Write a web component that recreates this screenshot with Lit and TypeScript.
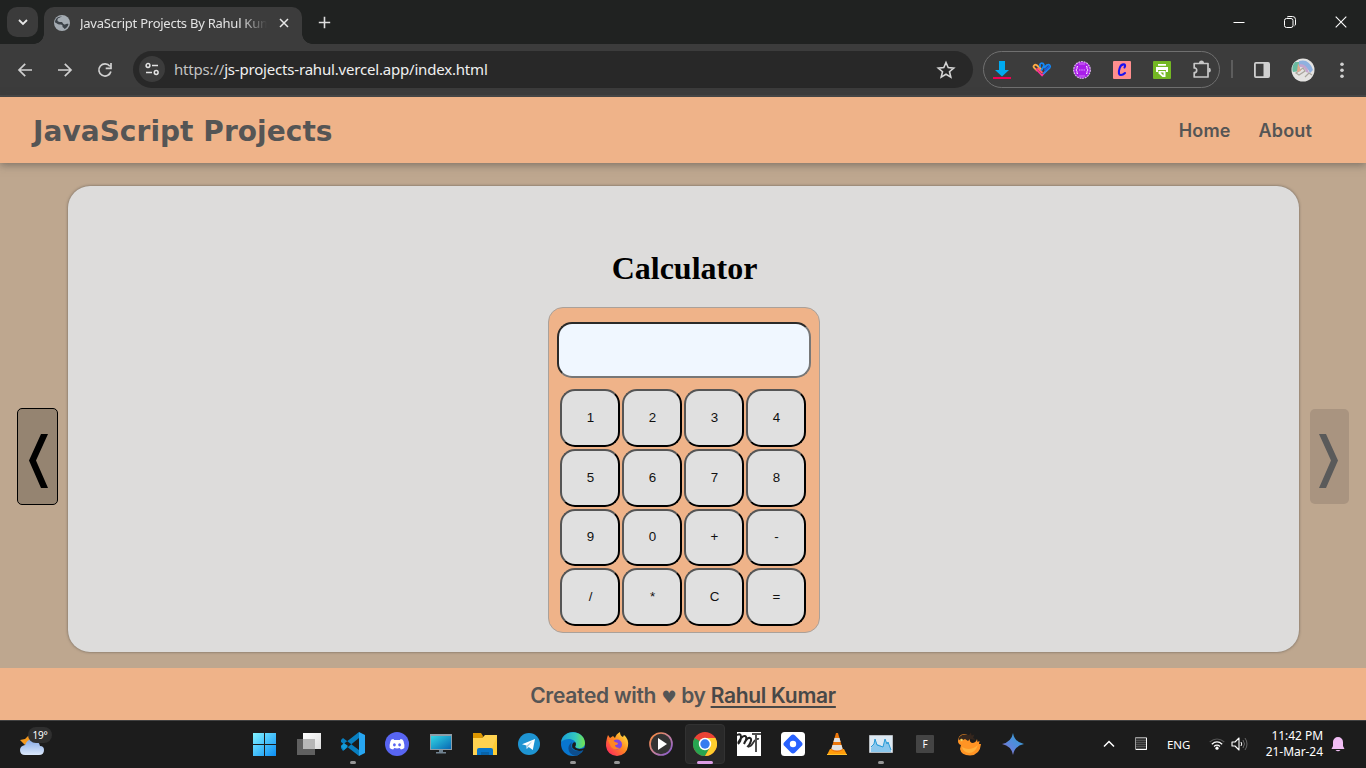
import { LitElement, html, css, svg } from "lit";
import { customElement } from "lit/decorators.js";
import { classMap } from "lit/directives/class-map.js";

const icon = (size: number, body: unknown, view = 24) =>
  html`<svg width=${size} height=${size} viewBox="0 0 ${view} ${view}" fill="none">${body}</svg>`;

@customElement("browser-chrome")
class BrowserChrome extends LitElement {
  static styles = css`
    :host { display: block; height: 97px; font-family: "Noto Sans", sans-serif; color: #e3e3e3; }
    svg { display: block; flex: none; }
    .tabs { height: 44px; box-sizing: border-box; background: #202221; display: flex; padding: 7px 0 0 7px; }
    .drop { width: 31px; height: 30px; border-radius: 10px; background: #3b3b3b; display: grid; place-items: center; }
    .tab { position: relative; margin-left: 6px; width: 258px; height: 37px; box-sizing: border-box; border-radius: 10px 10px 0 0; background: #3c3c3c; display: flex; align-items: center; padding: 0 9px 6px 9px; }
    .tab::before, .tab::after { content: ""; position: absolute; bottom: 0; width: 10px; height: 10px; }
    .tab::before { left: -10px; background: radial-gradient(circle at 0 0, transparent 9.5px, #3c3c3c 10px); }
    .tab::after { right: -10px; background: radial-gradient(circle at 100% 0, transparent 9.5px, #3c3c3c 10px); }
    .title { margin: 1px 0 0 9px; width: 187px; font-size: 13px; letter-spacing: -0.25px; line-height: 18px; white-space: nowrap; overflow: hidden; -webkit-mask-image: linear-gradient(90deg, #000 86%, transparent 100%); mask-image: linear-gradient(90deg, #000 86%, transparent 100%); }
    .close { margin-left: 11px; }
    .plus { margin: 6px 0 0 13px; }
    .window { margin-left: auto; display: flex; height: 30px; align-items: center; }
    .window > span { width: 51px; display: grid; place-items: center; }
    .bar { height: 53px; box-sizing: border-box; background: #3c3c3c; border-bottom: 2px solid #474747; display: flex; align-items: center; padding: 0 0 1px 4px; }
    .slot { width: 40px; height: 36px; box-sizing: border-box; padding-top: 1px; display: grid; place-items: center; flex: none; }
    .nudge { padding-left: 1px; }
    .omni { margin-left: 9px; width: 840px; height: 37px; border-radius: 19px; background: #282828; display: flex; align-items: center; box-sizing: border-box; padding-left: 6px; flex: none; }
    .site { width: 26px; height: 26px; border-radius: 50%; background: #3c3c3c; display: grid; place-items: center; }
    .url { margin-left: 9px; font-size: 15px; letter-spacing: -0.19px; line-height: 22px; white-space: nowrap; color: #f0f0f0; }
    .dim { color: #c3c3c3; }
    .star { margin-left: auto; margin-right: 7px; }
    .ext { margin-left: 10px; width: 237px; height: 37px; box-sizing: border-box; border: 1px solid #707070; border-radius: 19px; display: flex; align-items: center; justify-content: center; flex: none; }
    .ext .slot { padding-top: 2px; }
    .sep { margin: 0 9px 0 11px; width: 2px; height: 18px; background: #5d5d5d; }
  `;
  render() {
    const s = "#d0d0d0";
    return html`
      <div class="tabs">
        <div class="drop">${icon(12, svg`<path d="M2 4l4 4 4-4" stroke="#e8e8e8" stroke-width="1.8"/>`, 12)}</div>
        <div class="tab">
          ${icon(18, svg`<circle cx="9" cy="9" r="8" fill="#a4abb2"/><path d="M9 2.500c-1 1-4 1-4.500 3s1.500 2.500 4 2.500c1.500 0 1 2.500 3.500 2.500 1 0 2-1 3.500-.5-.5 2.500-2 4-4 5-.5-1.500-2.500-1.500-2-3 .3-1.500-1.500-1.500-3-1.500C4.500 10.500 3 8.500 2 8.500c0-3.500 3-6.500 7-6z" fill="#3c4248"/><path d="M10 2c-1 2 1 2 1 3s1 1 2 1" stroke="#a4abb2" stroke-width="1.500"/>`, 18)}
          <div class="title">JavaScript Projects By Rahul Kumar</div>
          <div class="close">${icon(12, svg`<path d="M2 2l8 8M10 2l-8 8" stroke="#e8e8e8" stroke-width="1.5"/>`, 12)}</div>
        </div>
        <div class="plus">${icon(18, svg`<path d="M9.500 3.800v11.400M3.800 9.500h11.400" stroke="#dedede" stroke-width="1.6"/>`, 18)}</div>
        <div class="window">
          <span>${icon(12, svg`<path d="M.5 6.5h11" stroke="#fff"/>`, 12)}</span>
          <span>${icon(12, svg`<rect x=".5" y="2.5" width="8.5" height="9" rx="2" stroke="#fff"/><path d="M3 1.2q.5-.7 2-.7h3.5q3 0 3 3V8q0 1.400-1 1.800" stroke="#fff"/>`, 12)}</span>
          <span>${icon(12, svg`<path d="M.7.7l10.600 10.600M11.300.7L.7 11.300" stroke="#fff" stroke-width="1.100"/>`, 12)}</span>
        </div>
      </div>
      <div class="bar">
        <div class="slot nudge">${icon(16, svg`<path d="M15 8H2M8.200 1.800L2 8l6.200 6.200" stroke=${s} stroke-width="1.700"/>`, 16)}</div>
        <div class="slot nudge">${icon(16, svg`<path d="M1 8h13M7.800 1.800L14 8l-6.200 6.200" stroke=${s} stroke-width="1.700"/>`, 16)}</div>
        <div class="slot nudge">${icon(16, svg`<path d="M13.900 9.500A6.100 6.100 0 1 1 12.900 4.300M14 1v5.300H8.700" stroke=${s} stroke-width="1.700"/>`, 16)}</div>
        <div class="omni">
          <div class="site">${icon(16, svg`<circle cx="4" cy="4.500" r="1.900" stroke="#e3e3e3" stroke-width="1.500"/><path d="M8 4.500h6M2 11.500h6" stroke="#e3e3e3" stroke-width="1.600"/><circle cx="12.200" cy="11.500" r="1.900" stroke="#e3e3e3" stroke-width="1.500"/>`, 16)}</div>
          <div class="url"><span class="dim">https://</span>js-projects-rahul.vercel.app/index.html</div>
          <div class="slot star">${icon(20, svg`<path d="M10 2.500l2.200 5.100 5.500.5-4.200 3.600 1.300 5.400-4.800-2.900-4.800 2.900 1.300-5.400-4.200-3.600 5.500-.5z" stroke="#d4d4d4" stroke-width="1.600"/>`, 20)}</div>
        </div>
        <div class="ext">
          <div class="slot">${icon(18, svg`<path d="M6 0h6v9h4l-7 6.500L2 9h4z" fill="#00aaf0"/><path d="M0 16h18v2H0z" fill="#f00054"/>`, 18)}</div>
          <div class="slot">${icon(20, svg`<g stroke-width="1.800" stroke-linecap="round" stroke-linejoin="round"><path d="M9.500 9.500L4.500 5Q3 4.300 2 5.500t.2 2.300L5 10.500" stroke="#ffab45"/><path d="M4.500 9.500L10 15.500l4-4.500" stroke="#ff2f9b"/><path d="M6 8.500l4 4" stroke="#ff5e66"/><path d="M8 6.500V4.500Q9 2.500 11 3.500q1.500 1.500.5 3L9.500 10M12.500 7.500L15 5q1.700-1 2.700.3t0 2.500l-6 5.500" stroke="#1688f5"/><path d="M13 10l4-3.500" stroke="#1c5edf"/></g>`, 20)}</div>
          <div class="slot">${icon(18, svg`<circle cx="9" cy="9" r="8.300" fill="#a91ee9" stroke="#dfb4f4" stroke-width="1.200" stroke-dasharray="2 .7"/><path d="M5 5.500H4v2L3 9l1 1.500v2h1M13 5.500h1v2L15 9l-1 1.500v2h-1M6.300 9h1M8.500 9h1M10.700 9h1" stroke="#f5dcff" stroke-width="1"/><path d="M6 3h6M6 15h6" stroke="#d27bf5"/>`, 18)}</div>
          <div class="slot">${icon(18, svg`<rect width="18" height="18" rx="1" fill="#ff8e8e"/><path d="M11.500 6.500c2.500-4-3.200-4.500-4.800.5C5 12 6 14.300 8 14c1.700 0 3-1 4-2" stroke="#1911ef" stroke-width="2.100" stroke-linecap="round"/>`, 18)}</div>
          <div class="slot">${icon(18, svg`<rect width="18" height="18" rx="1" fill="#74b824"/><path d="M5 3h8v1.800H5zM3 6h12v5h-2V9H5v2H3zM5.500 10h7v6H9.500l-4-3.500z" fill="#fff"/><path d="M7.500 11.500h3v3z" fill="#74b824"/>`, 18)}</div>
          <div class="slot">${icon(20, svg`<path d="M2.200 3.500H16v13.500H2.200v-4.300q2.500 0 2.500-2.400T2.200 7.900z" stroke="#c7c7c7" stroke-width="1.700" stroke-linejoin="round"/><path d="M7 3a2.500 2.500 0 0 1 5 0zM16.500 7.800a2.400 2.400 0 0 1 0 4.800z" fill="#c7c7c7"/>`, 20)}</div>
        </div>
        <div class="sep"></div>
        <div class="slot">${icon(18, svg`<rect x="1.900" y="1.900" width="14.200" height="14.200" rx="1" stroke="#cfcfcf" stroke-width="1.800"/><path d="M10.500 2H16v14h-5.500z" fill="#cfcfcf"/>`, 18)}</div>
        <div class="slot nudge">${icon(24, svg`<circle cx="12" cy="12" r="11.500" fill="#e4e3e1"/><path d="M4 4l4 0 1 9-7 1q-2-5 2-10z" fill="#69baa0"/><path d="M8 3q10-3 14 9l-3 3Q16 7 8 8z" fill="#8fb1df"/><path d="M9 6q7 0 9 9l-3-1q-1-5-6-5z" fill="#c4a4cd"/><path d="M5 15l7-5 2 3-6 4zM14 19l4-4 3 2" stroke="#aaa69d" stroke-width="1.200"/><path d="M7 5l3 8-4 1z" fill="#e2a68c"/>`)}</div>
        <div class="slot">${icon(18, svg`<g fill="#d0d0d0"><circle cx="9" cy="3.300" r="1.800"/><circle cx="9" cy="9.300" r="1.800"/><circle cx="9" cy="15.200" r="1.800"/></g>`, 18)}</div>
      </div>`;
  }
}

@customElement("calc-widget")
class CalcWidget extends LitElement {
  static styles = css`
    :host { display: flex; flex-direction: column; align-items: center; font-family: "Liberation Serif", serif; }
    h1 { margin: 0 0 0 2px; font-size: 32px; line-height: 36px; color: #000; letter-spacing: 0; }
    .body { margin: 21px 0 0 1px; width: 272px; height: 326px; box-sizing: border-box; border: 1px solid #aaa19a; border-radius: 15px; background: #efb389; padding: 14px 8px 0; }
    .screen { display: block; width: 254px; height: 56px; box-sizing: border-box; border: 2px solid; border-color: #2b2a29 #777 #777 #2b2a29; border-radius: 15px; background: #f0f7ff; }
    .keys { display: grid; grid-template-columns: repeat(4, 60px); gap: 2px; margin: 11px 0 0 3px; }
    .key { height: 57.75px; box-sizing: border-box; padding: 0 0 1px 1px; border: 2px solid; border-color: #555 #000 #000 #555; border-radius: 15px; background: #e0e0e0; color: #111; font: 13.333px "Liberation Sans", sans-serif; }
  `;
  render() {
    return html`<h1>Calculator</h1>
      <div class="body">
        <div class="screen"></div>
        <div class="keys">${[..."1234567890+-/*C="].map((k) => html`<button class="key">${k}</button>`)}</div>
      </div>`;
  }
}

@customElement("task-bar")
class TaskBar extends LitElement {
  static styles = css`
    :host { display: flex; height: 48px; box-sizing: border-box; border-top: 1px solid #414141; background: #1c1c1c; color: #fff; font-family: "Noto Sans", sans-serif; align-items: center; }
    svg { display: block; }
    .weather { position: relative; width: 243px; height: 47px; flex: none; box-sizing: border-box; padding: 11px 0 0 19px; }
    .temp { position: absolute; left: 28px; top: 6px; width: 24px; height: 16px; border-radius: 8px; background: #2f2f2f; font-size: 10px; line-height: 16px; text-align: center; letter-spacing: -0.3px; }
    .app { width: 44px; height: 47px; flex: none; display: flex; justify-content: center; align-items: center; position: relative; box-sizing: border-box; padding-bottom: 1px; }
    .app.active::before { content: ""; position: absolute; left: 2px; top: 3px; width: 38px; height: 38px; border: 1px solid #323232; border-radius: 4px; background: #292929; }
    .app svg { position: relative; }
    .app.open::after, .app.active::after { content: ""; position: absolute; bottom: 4px; width: 6px; height: 3px; border-radius: 2px; background: #969696; }
    .app.active::after { width: 16px; background: #dc9de5; }
    .tray { margin-left: auto; display: flex; align-items: center; height: 47px; padding: 0 20px 1px 0; box-sizing: border-box; }
    .lang { margin: 1px 0 0 19px; width: 30px; font-size: 11.500px; letter-spacing: -0.1px; }
    .grid { margin-left: 19px; }
    .wifi { margin-left: 12px; }
    .vol { margin-left: 6px; }
    .clock { margin-left: 10px; width: 65px; text-align: right; font-size: 12px; line-height: 16px; letter-spacing: -0.05px; white-space: nowrap; }
    .bell { margin-left: 7px; }
  `;
  apps: [unknown, string][] = [
    [svg`<defs><linearGradient id="win" x1="0" y1="0" x2="1" y2="1"><stop stop-color="#82f3ff"/><stop offset="1" stop-color="#0b8df5"/></linearGradient></defs><path d="M0 1h11v11H0zM12 1h11v11H12zM0 13h11v11H0zM12 13h11v11H12z" fill="url(#win)"/>`, ""],
    [svg`<defs><linearGradient id="tv" x2="1" y2="1"><stop stop-color="#fff"/><stop offset="1" stop-color="#ddd"/></linearGradient></defs><path d="M6 1h18v16H6z" fill="url(#tv)"/><path d="M0 7h18v16H0z" fill="#606060"/><path d="M6 7h12v10H6z" fill="#b7b7b7"/>`, ""],
    [svg`<path d="M0 8l2-2 16 12v6L0 10zM0 16l2 3L18 6V0L0 14z" fill="#087ebf"/><path d="M18 0l6 3v18l-6 3z" fill="#27a6f1"/><path d="M0 14l3 4 4-4-4-3z" fill="#149bd9"/>`, "open"],
    [svg`<circle cx="12" cy="12" r="12" fill="#5865f2"/><path d="M8.500 7Q6 7 5.500 9q-1.300 4-.8 7 1.300 1.300 3.500 1.600l1-1.500q3 .8 5.600 0l1 1.500q2.200-.3 3.500-1.600.5-3-.8-7-.7-2-3-2l-.5 1H9z" fill="#fff"/><ellipse cx="9.400" cy="12.800" rx="1.400" ry="1.600" fill="#5865f2"/><ellipse cx="14.600" cy="12.800" rx="1.400" ry="1.600" fill="#5865f2"/>`, ""],
    [svg`<defs><linearGradient id="pc" x2="1" y2="1"><stop stop-color="#31d6e4"/><stop offset="1" stop-color="#0868b4"/></linearGradient></defs><path d="M1 2h22v16H1z" fill="#8e9da7"/><path d="M2 4h20v13H2z" fill="url(#pc)"/><path d="M10 18h4v2h3v1.500H7V20h3z" fill="#708290"/>`, ""],
    [svg`<path d="M0 1h8l2 3-1 4H0z" fill="#dc9600"/><path d="M0 6h9l3-3h12v20H0z" fill="#ffd250"/><path d="M24 5v18h-8z" fill="#ffc91e" opacity=".55"/><path d="M4 23v-5q0-2 2-2h12q2 0 2 2v5z" fill="#0875c9"/><path d="M8 20h8v3H8z" fill="#0963a8"/>`, ""],
    [svg`<circle cx="12" cy="12" r="11" fill="#1e94d2"/><path d="M5 12.200L18 7l-2.200 11-4.100-3-2 2-.2-3.600z" fill="#fff"/><path d="M9.500 13.500l6-4.500-4.300 5.400-1.500 2.400z" fill="#abcfe3"/>`, ""],
    [svg`<defs><linearGradient id="edge" x1="0" x2="1"><stop stop-color="#189fd8"/><stop offset=".6" stop-color="#33c7bd"/><stop offset="1" stop-color="#74e44c"/></linearGradient></defs><circle cx="12" cy="12" r="12" fill="#0876cf"/><path d="M0 10C2-3 23-3 24 11c0 5-6 7-10 4 3-4-1-8-6-8Q3 7 0 10z" fill="url(#edge)"/><path d="M11 10q-3 7 5 9 4 .5 6-1.500Q16 28 9 21 5 15 11 10z" fill="#0d4e8e"/><path d="M14 15q3 3.500 9.500 1l1.500 1.500-2.200.5q-7 2.500-11.300-2-1-3 .5-5 1-1 2.500-.5 1 2-.5 4.500z" fill="#1c1c1c"/>`, "open"],
    [svg`<defs><linearGradient id="fox" x1="1" x2="0" y2="1"><stop stop-color="#fff34a"/><stop offset=".45" stop-color="#ff8b20"/><stop offset="1" stop-color="#ff1668"/></linearGradient></defs><path d="M2 6l1-3 2 3 3-2 2 2q1-4 5-6 0 4 3 5l1-2q5 4 4 11-1 9-11 10Q2 23 1 14q0-5 1-8z" fill="url(#fox)"/><circle cx="12" cy="12.500" r="5" fill="#8044df"/><path d="M3 8q5-1 7 2l3 1q0 2-3 2 0 3 5 3-5 3-9-1z" fill="#ff8624"/>`, "open"],
    [svg`<defs><linearGradient id="ring" x2="1" y2="1"><stop stop-color="#ff8a32"/><stop offset=".5" stop-color="#c6829b"/><stop offset="1" stop-color="#8055d4"/></linearGradient></defs><circle cx="12" cy="12" r="11" fill="#333" stroke="url(#ring)" stroke-width="1.700"/><path d="M9 6l9 6-9 6z" fill="#fff"/>`, ""],
    [svg`<circle cx="12" cy="12" r="12" fill="#eb4335"/><path d="M1.600 6A12 12 0 0 0 12 24l5.200-9z" fill="#28a550"/><path d="M12 24A12 12 0 0 0 22.400 6H12l5.200 9z" fill="#ffce2d"/><circle cx="12" cy="12" r="6.200" fill="#fff"/><circle cx="12" cy="12" r="4.700" fill="#367cf0"/>`, "active"],
    [svg`<path d="M0 0h24v24H0z" fill="#fff"/><path d="M0 3Q4 1 4 5T1 12M1 11Q5 3 8 4t-1 8Q10 5 13 6t-2 9" stroke="#222" stroke-width="2"/><path d="M10 14q3 2 6-3t6-4" stroke="#333" stroke-width="1.800"/><path d="M19 1v19M15 2h9" stroke="#505050" stroke-width="2"/>`, ""],
    [svg`<rect width="24" height="24" rx="3.500" fill="#fff"/><rect x="4.500" y="4.500" width="15" height="15" rx="3" transform="rotate(45 12 12)" fill="#2962ff"/><circle cx="12" cy="12" r="3.200" fill="#fff"/>`, ""],
    [svg`<path d="M5 17h14l3 6H2z" fill="#ff9c0b"/><path d="M11 1h2l5 17q-6 4-12 0z" fill="#ed770b"/><path d="M9.500 6h5l1.100 4H8.400zM7.400 13h9.200l1 4q-5.600 3-11.200 0z" fill="#e2e2e2"/><path d="M2 22h20v1H2z" fill="#ffc22c"/>`, ""],
    [svg`<path d="M.5 3.500h23v17H.5z" fill="#dce9f3" stroke="#b6bbc0"/><path d="M2 16l3-4 1-5 2 5 3 1 3 2 2-8 2 5 1-2 3 8v2H2z" fill="#8ac7ed"/><path d="M2 15l3-3 1-5 2 6 3 1 3 1 2-8 2 5 1-2 3 8" stroke="#279bd7"/>`, "open"],
    [svg`<rect x="3" y="3" width="18" height="18" rx="1" fill="#444"/><text x="12" y="16" text-anchor="middle" font-family="Noto Sans" font-size="10" fill="#fff">F</text>`, ""],
    [svg`<path d="M1 9Q1 3 7 2q4 0 6 4-1 4 2 5 4 0 5-4l.5 3 2-1-.5 3h2q-1 11-11 11.500Q4 23 3 17l1-4q-3-1-3-4z" fill="#ff9424"/><path d="M1.500 7Q3 2 9 2.500l3 .5 2-2.500.5 3 3-1L16 6q2 0 2 2l-5-1-2 2-3-2-4 2z" fill="#35261d"/><circle cx="4.500" cy="8" r="1.300" fill="#f9d15b"/><path d="M5 15q8 5 16-2-3 8-9 8-6-1-7-6z" fill="#ffb13c"/>`, ""],
    [svg`<defs><linearGradient id="spark" x2="1" y1="1" y2="0"><stop stop-color="#b05fa8"/><stop offset=".4" stop-color="#5b86dd"/><stop offset="1" stop-color="#2aa3cf"/></linearGradient></defs><path d="M12 1q1.500 9 11 11-9.500 2-11 11-1.500-9-11-11 9.500-2 11-11z" fill="url(#spark)"/>`, ""],
  ];
  render() {
    return html`
      <div class="weather">
        ${icon(26, svg`<defs><linearGradient id="cl" y2="1" x2="0"><stop stop-color="#86a9e5"/><stop offset="1" stop-color="#dce9fc"/></linearGradient></defs><path d="M1 8l5-1 5-5 0 6-5 5z" fill="#f5991d"/><path d="M6 23q-5 0-5-5 0-4 5-5Q9 6 15 8q5 1 6 6 4 0 4 4 0 5-5 5z" fill="url(#cl)"/>`, 26)}
        <span class="temp">19°</span>
      </div>
      ${this.apps.map(([g, state]) => html`<div class=${classMap({ app: true, open: state === "open", active: state === "active" })}>${icon(24, g)}</div>`)}
      <div class="tray">
        ${icon(12, svg`<path d="M1 8.500l5-5 5 5" stroke="#fff" stroke-width="1.500"/>`, 12)}
        <div class="grid">${icon(14, svg`<path d="M1.500.5h11v12h-11z" fill="#303030" stroke="#999"/><path d="M3 1v11M5 1v11M7 1v11M9 1v11M11 1v11" stroke="#777" stroke-dasharray="1 1"/><path d="M12.500 1v11.500H2" stroke="#fff"/>`, 14)}</div>
        <div class="lang">ENG</div>
        <div class="wifi">${icon(16, svg`<path d="M.7 6q7.300-6 14.600 0" stroke="#555" stroke-width="1.200"/><path d="M2.800 8.200q5.200-4.600 10.400 0M5 10.400q3-2.500 6 0" stroke="#fff" stroke-width="1.300"/><circle cx="8" cy="12.200" r="1.600" fill="#fff"/>`, 16)}</div>
        <div class="vol">${icon(17, svg`<path d="M1 6h3l4-4v12l-4-4H1z" stroke="#fff" stroke-width="1.100" stroke-linejoin="round"/><path d="M10 6q1.500 2 0 4" stroke="#fff"/><path d="M12 4q3 4 0 8M14 2q4 6 0 12" stroke="#666"/>`, 17)}</div>
        <div class="clock">11:42 PM<br />21-Mar-24</div>
        <div class="bell">${icon(16, svg`<path d="M3 6a5 5 0 0 1 10 0v4l1.500 3h-13L3 10z" fill="#f0bdf3"/><path d="M5.500 14h5q-2.500 2.500-5 0z" fill="#f0bdf3"/>`, 16)}</div>
      </div>`;
  }
}

@customElement("app-root")
class AppRoot extends LitElement {
  static styles = css`
    :host { display: flex; flex-direction: column; width: 1366px; height: 768px; overflow: hidden; color: #555; font-family: Inter, sans-serif; }
    header { position: relative; height: 66px; flex: none; box-sizing: border-box; background: #efb389; display: flex; align-items: center; padding: 0 54px 0 33px; box-shadow: 0 2px 8px rgba(60, 60, 60, 0.5); }
    .brand { margin-top: 4px; font: bold 28px/40px "DejaVu Sans", sans-serif; letter-spacing: 0.05px; white-space: nowrap; }
    nav { margin-left: auto; display: flex; gap: 28px; font-size: 18px; font-weight: 600; letter-spacing: 0.15px; }
    main { flex: 1; background: #bea78f; display: flex; align-items: flex-start; padding-left: 17px; }
    .arrow { box-sizing: border-box; display: grid; place-items: center; border-radius: 5px; padding: 8px 0 0; }
    .prev { margin-top: 245px; width: 41px; height: 97px; border: 1px solid #000; background: #958471; color: #000; padding-left: 2px; }
    .next { margin-top: 246px; width: 39px; height: 95px; border: 0; background: #a99480; color: #5a5a5a; }
    .card { margin: 23px 11px 0 10px; width: 1231px; height: 466px; box-sizing: border-box; padding-top: 64px; border-radius: 22px; background: #dddcdb; box-shadow: 0 0 3px rgba(50, 50, 50, 0.6); }
    footer { height: 52px; flex: none; background: #efb389; font-size: 21px; font-weight: 600; line-height: 56px; text-align: center; letter-spacing: -0.29px; white-space: nowrap; }
    .heart { font-family: "DejaVu Sans", sans-serif; font-size: 17px; }
    .author { color: #484848; text-decoration: underline; text-underline-offset: 3px; text-decoration-thickness: 2px; }
  `;
  render() {
    return html`
      <browser-chrome></browser-chrome>
      <header><div class="brand">JavaScript Projects</div><nav><span>Home</span><span>About</span></nav></header>
      <main>
        <button class="arrow prev"><svg width="21" height="56" viewBox="0 0 21 56"><path d="M13 1h7L8 27.500 20 55h-7L1 27.500z" fill="currentColor" /></svg></button>
        <section class="card"><calc-widget></calc-widget></section>
        <button class="arrow next"><svg width="21" height="56" viewBox="0 0 21 56"><path d="M0 1h7l12 26.500L7 55H0l12-27.500z" fill="currentColor" /></svg></button>
      </main>
      <footer>Created with <span class="heart">♥</span> by <span class="author">Rahul Kumar</span></footer>
      <task-bar></task-bar>`;
  }
}
